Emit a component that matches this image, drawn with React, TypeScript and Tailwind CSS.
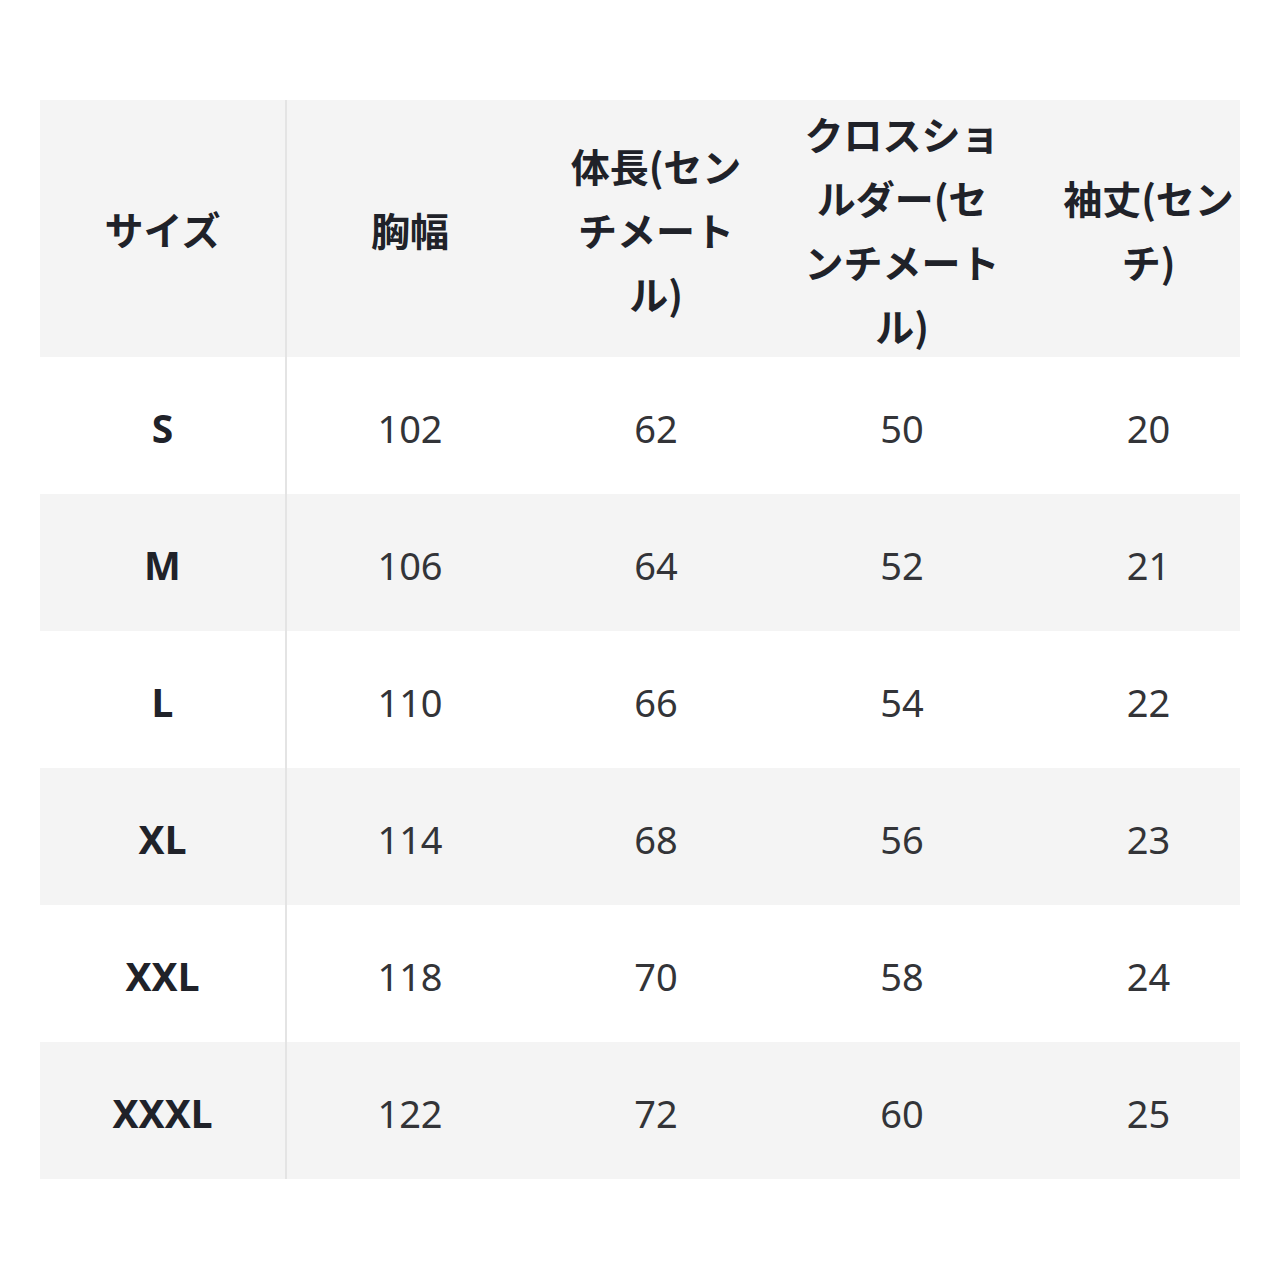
import type { FC } from 'react'

type Row = { size: string; values: number[] }

const headers = ['胸幅', '体長(センチメートル)', 'クロスショルダー(センチメートル)', '袖丈(センチ)']

const rows: Row[] = [
  { size: 'S', values: [102, 62, 50, 20] },
  { size: 'M', values: [106, 64, 52, 21] },
  { size: 'L', values: [110, 66, 54, 22] },
  { size: 'XL', values: [114, 68, 56, 23] },
  { size: 'XXL', values: [118, 70, 58, 24] },
  { size: 'XXXL', values: [122, 72, 60, 25] },
]

const jp = { fontFamily: '"Noto Sans CJK JP", "Noto Sans", sans-serif' }
const latin = { fontFamily: '"Noto Sans", "Open Sans", sans-serif' }

// column widths: size col, then data cols; last col shifted right a little
const cellCls = [
  'w-[247px] px-5',
  'w-[246px] px-5',
  'w-[246px] px-5',
  'w-[246px] px-5',
  'w-[215px] pl-[32px] pr-0',
]

const SizeTable: FC = () => {
  return (
    <div className="w-[1200px] ml-10 mt-[100px]">
      <div className="flex h-[257px] bg-[#f4f4f4]">
        <div
          className={`${cellCls[0]} flex items-center justify-center border-r-2 border-[#e4e4e4] text-[39px] font-bold text-[#202229]`}
          style={jp}
        >
          サイズ
        </div>
        {headers.map((h, i) => (
          <div
            key={h}
            className={`${cellCls[i + 1]} flex items-center justify-center text-center text-[39px] leading-[64px] font-bold text-[#202229]`}
            style={jp}
          >
            <span>{h}</span>
          </div>
        ))}
      </div>

      {rows.map((r, idx) => (
        <div key={r.size} className={`flex h-[137px] ${idx % 2 === 1 ? 'bg-[#f4f4f4]' : 'bg-white'}`}>
          <div
            className={`${cellCls[0]} flex items-center justify-center pt-[5px] border-r-2 border-[#e4e4e4] text-[39px] font-bold text-[#202229]`}
            style={latin}
          >
            {r.size}
          </div>
          {r.values.map((v, i) => (
            <div
              key={i}
              className={`${cellCls[i + 1]} flex items-center justify-center pt-[5px] text-[38px] text-[#333438]`}
              style={latin}
            >
              {v}
            </div>
          ))}
        </div>
      ))}
    </div>
  )
}

export default function App() {
  return (
    <div className="w-[1280px] h-[1280px] bg-white overflow-hidden">
      <SizeTable />
    </div>
  )
}
